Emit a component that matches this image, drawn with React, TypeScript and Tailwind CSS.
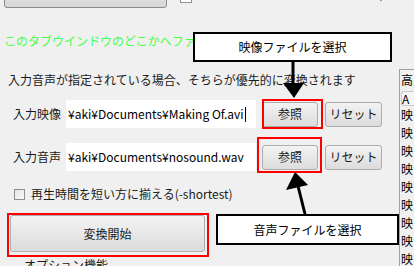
import React from "react";

const jp = { fontFamily: '"Noto Sans CJK JP", "Noto Sans", sans-serif' };

function WinButton({ label, className }: { label: string; className?: string }) {
  return (
    <button
      type="button"
      className={
        "flex shrink-0 items-center justify-center rounded-[3px] border border-[#adadad] bg-gradient-to-b from-[#f3f3f3] to-[#dcdcdc] text-[12px] text-[#1a1a1a] " +
        (className ?? "")
      }
    >
      {label}
    </button>
  );
}

function FileRow({ label, path, caret, mt }: { label: string; path: string; caret?: boolean; mt: string }) {
  return (
    <div className={"flex items-center " + mt}>
      <span className="w-[66px] shrink-0 pl-[13px] text-[12px] leading-4 text-[#1a1a1a] whitespace-nowrap">{label}</span>
      <div className="flex h-[28px] w-[190px] shrink-0 items-center overflow-hidden bg-white pl-[2px] text-[12px] text-black whitespace-nowrap">
        <span>{path}</span>
        {caret && <span className="ml-px inline-block h-[15px] w-px bg-black" />}
      </div>
      <WinButton label="参照" className="ml-[6px] h-[25px] w-[56px]" />
      <WinButton label="リセット" className="ml-[7px] h-[25px] w-[57px]" />
    </div>
  );
}

export default function App() {
  const rows = ["映", "映", "映", "映", "映", "映", "映", "映", "映"];
  return (
    <div className="relative h-[266px] w-[414px] overflow-hidden bg-[#f0f0f0]" style={jp}>
      {/* top strip, scrolled off */}
      <div className="flex items-end">
        <div className="ml-[4px] -mt-[16px] h-[24px] w-[163px] shrink-0 rounded-[3px] border border-[#8a8a8a] bg-gradient-to-b from-[#ececec] to-[#d6d6d6]" />
        <div className="ml-[13px] -mt-[10px] mb-[5px] h-[13px] w-[12px] shrink-0 self-start border border-[#8f8f8f] bg-white" />
        <span className="ml-[30px] -mt-[14px] self-start text-[12px] leading-4 text-[#1a1a1a] whitespace-nowrap">
          フォルダ内の全ファイル処理(バッチ)
        </span>
      </div>

      <p className="mt-[25px] pl-[4px] text-[12px] leading-4 text-[#44ff44] whitespace-nowrap">
        このタブウインドウのどこかへファイルをドロップしてくださいドロ
      </p>

      <div className="flex">
        <div className="w-[399px] shrink-0">
          <p className="mt-[23px] pl-[8px] text-[12px] leading-4 text-[#1a1a1a] whitespace-nowrap">
            入力音声が指定されている場合、そちらが優先的に変換されます
          </p>
          <FileRow label="入力映像" path="¥aki¥Documents¥Making Of.avi" caret mt="mt-[12px]" />
          <FileRow label="入力音声" path="¥aki¥Documents¥nosound.wav" mt="mt-[15px]" />
          <label className="mt-[15px] flex items-center pl-[14px] text-[12px] leading-4 text-[#1a1a1a] whitespace-nowrap">
            <span className="h-[11px] w-[11px] border border-[#8f8f8f] bg-gradient-to-br from-[#e4e4e4] to-[#fafafa]" />
            <span className="ml-[6px]">再生時間を短い方に揃える(-shortest)</span>
          </label>
          <WinButton label="変換開始" className="ml-[10px] mt-[13px] h-[37px] w-[195px]" />
          <p className="mt-[5px] pl-[24px] text-[12px] leading-4 text-[#1a1a1a] whitespace-nowrap">オプション機能</p>
        </div>

        <div className="mt-[20px] flex-1 border-l border-t border-[#a0a0a0] pl-[1px] text-[12px] text-black">
          <div className="mt-[2px] h-[16px] leading-4">高</div>
          <div className="mt-[3px] h-[15px] rounded-l-[3px] border border-r-0 border-[#c8c8c8] bg-[#f6f6f6] leading-[13px]">A</div>
          {rows.map((r, i) => (
            <div key={i} className="flex h-[18px] items-center">
              {r}
            </div>
          ))}
        </div>
      </div>

      {/* annotations */}
      <div className="absolute left-[262px] top-[99px] h-[30px] w-[61px] border-2 border-[#ff0000]" />
      <div className="absolute left-[257px] top-[137px] h-[36px] w-[65px] border-2 border-[#ff0000]" />
      <div className="absolute left-[7px] top-[213px] h-[44px] w-[202px] border-2 border-[#ff0000]" />

      <svg className="pointer-events-none absolute left-0 top-0" width="414" height="266">
        <line x1="293" y1="60" x2="293" y2="85" stroke="#000" strokeWidth="3" />
        <polygon points="283,83 304,83 294,98" fill="#000" />
        <line x1="305" y1="214" x2="298" y2="186" stroke="#000" strokeWidth="3" />
        <polygon points="295,172 286,190 308,185" fill="#000" />
      </svg>

      <div className="absolute left-[193px] top-[32px] flex h-[30px] w-[199px] items-center justify-center border-2 border-black bg-white text-[12px] text-black">
        映像ファイルを選択
      </div>
      <div className="absolute left-[216px] top-[214px] flex h-[31px] w-[183px] items-center justify-center border-2 border-black bg-white text-[12px] text-black">
        音声ファイルを選択
      </div>
    </div>
  );
}
